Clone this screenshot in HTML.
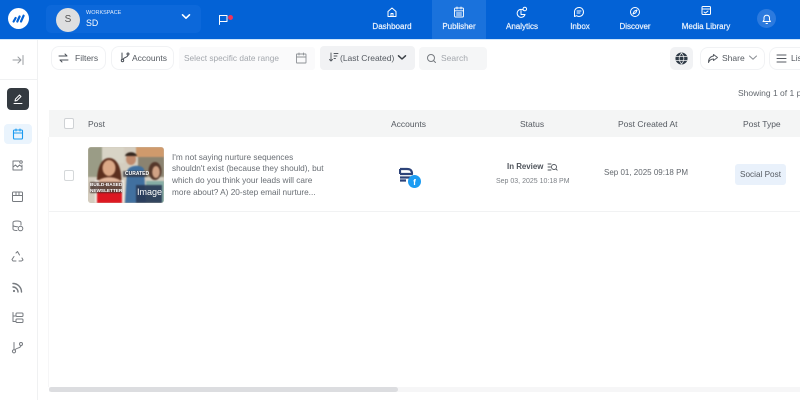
<!DOCTYPE html>
<html><head><meta charset="utf-8">
<style>
*{box-sizing:border-box;margin:0;padding:0}
html,body{width:800px;height:400px;overflow:hidden;background:#fff;font-family:"Liberation Sans",sans-serif;color:#4a4f57}
#w{position:absolute;left:0;top:0;width:800px;height:400px;overflow:hidden;filter:blur(.3px)}
.a{position:absolute}
.t{position:absolute;white-space:nowrap;line-height:12px}
svg{position:absolute;fill:none;stroke-linecap:round;stroke-linejoin:round}
.nav{color:#eef4fd;font-size:8px;text-align:center;top:20.5px;height:12px;line-height:12px;white-space:nowrap;-webkit-text-stroke:.2px #eef4fd}
.btn{position:absolute;border:1px solid #f1f2f4;border-radius:8px;background:#fff;height:24px;top:46px}
.gr{position:absolute;background:#f5f6f7;border-radius:4px}
.th{position:absolute;top:118px;font-size:8.5px;line-height:12px;color:#555a61;white-space:nowrap}
</style></head><body><div id="w">
<div class="a" style="left:0;top:0;width:800px;height:39px;background:#0362d6"></div>
<div class="a" style="left:0;top:39px;width:800px;height:1px;background:#cfe6fb"></div>
<div class="a" style="left:8px;top:8px;width:21px;height:21px;border-radius:50%;background:#fff"></div>
<svg style="left:8px;top:8px" width="21" height="21" stroke="#0362d6" stroke-width="2.200"><path d="M5.600 13.500 7.600 10M9.300 13.500l2.300-5M13 13.500l2.600-5.800"/></svg>
<div class="a" style="left:46px;top:5px;width:155px;height:28px;border-radius:5px;background:#0c68da"></div>
<div class="a" style="left:56px;top:8px;width:24px;height:24px;border-radius:50%;background:#dedfe0;color:#555;font-size:10px;line-height:24px;text-align:center">S</div>
<div class="t" style="left:86px;top:7px;font-size:5.500px;color:#e3edfb;line-height:12px">WORKSPACE</div>
<div class="t" style="left:86px;top:17px;font-size:8.800px;color:#fff">SD</div>
<svg style="left:181px;top:13px" width="10" height="8" stroke="#fff" stroke-width="1.600"><path d="M1.500 1.800 5 5.200 8.500 1.800"/></svg>
<svg style="left:217px;top:13px" width="13" height="13" stroke="#fff" stroke-width="1"><path d="M2.500 11.500V2.500h7.500v6H2.500"/></svg>
<div class="a" style="left:228px;top:14.500px;width:5px;height:5px;border-radius:50%;background:#f0325a"></div>

<div class="a" style="left:432px;top:0;width:54px;height:39px;background:#1a72dc"></div>
<div class="nav a" style="left:367px;width:50px">Dashboard</div>
<div class="nav a" style="left:434px;width:50px">Publisher</div>
<div class="nav a" style="left:497px;width:50px">Analytics</div>
<div class="nav a" style="left:555px;width:50px">Inbox</div>
<div class="nav a" style="left:610px;width:50px">Discover</div>
<div class="nav a" style="left:676px;width:60px">Media Library</div>
<svg style="left:386px;top:6px" width="12" height="12" stroke="#fff" stroke-width="1"><path d="M2 5.500 6 2l4 3.500V10.500H2zM5 10.500V7.500h2v3"/></svg>
<svg style="left:453px;top:6px" width="12" height="12" stroke="#fff" stroke-width=".9"><rect x="1.500" y="2" width="9" height="9" rx="1"/><path d="M1.500 4.800h9M4 1v2M8 1v2M3.500 7h5M3.500 9h5"/></svg>
<svg style="left:516px;top:6px" width="12" height="12" stroke="#fff" stroke-width="1"><path d="M8 4.500A4 4 0 1 0 9 8.500H5V4.500"/><circle cx="8.800" cy="3" r="1.800"/></svg>
<svg style="left:573px;top:6px" width="12" height="12" stroke="#fff" stroke-width="1"><path d="M1.500 6a4.500 4.500 0 1 1 2 3.700L1.500 10.500zM4 5h4M4 7h3"/></svg>
<svg style="left:629px;top:6px" width="12" height="12" stroke="#fff" stroke-width="1"><circle cx="6" cy="6" r="4.500"/><path d="M8 4 6.800 6.800 4 8l1.200-2.800z"/></svg>
<svg style="left:700px;top:5px" width="12" height="12" stroke="#fff" stroke-width="1"><rect x="2" y="1.500" width="8.500" height="8" rx="1"/><path d="M2 4h8.500M4 7l1.500 1L8 6"/></svg>
<div class="a" style="left:757px;top:9px;width:19px;height:19px;border-radius:50%;background:#2c7ade"></div>
<svg style="left:761px;top:13px" width="12" height="12" stroke="#fff" stroke-width="1"><path d="M2 8.500h7.500L8.500 7V4.500a2.800 2.800 0 0 0-5.500 0V7zM5 10.500h1.500"/></svg>

<div class="a" style="left:37px;top:40px;width:1px;height:360px;background:#f0f1f2"></div>
<div class="a" style="left:0;top:79px;width:37px;height:1px;background:#f0f1f2"></div>
<svg style="left:11px;top:53px" width="14" height="14" stroke="#9a9da1" stroke-width="1"><path d="M2 7h8M7 4l3 3-3 3M12 2.500v9"/></svg>
<div class="a" style="left:7px;top:88px;width:22px;height:22px;border-radius:4px;background:#343a40"></div>
<svg style="left:12px;top:93px" width="12" height="12" stroke="#fff" stroke-width="1"><path d="M3 8l.5-2 4-4 1.500 1.500-4 4zM2 10.500h8"/></svg>
<div class="a" style="left:4px;top:124px;width:28px;height:20px;border-radius:4px;background:#eaf4fd"></div>
<svg style="left:12px;top:128px" width="12" height="12" stroke="#1d9bf0" stroke-width="1.100"><rect x="1.500" y="2" width="9" height="9" rx="1"/><path d="M1.500 5h9M4 1v2M8 1v2"/></svg>
<svg style="left:11px;top:159px" width="13" height="13" stroke="#777b80" stroke-width="1"><path d="M8 2H2v9h9V6M2 8l2.500-2 2 2 2-2 2.500 2"/><circle cx="10" cy="3" r="1.300"/></svg>
<svg style="left:11px;top:190px" width="13" height="13" stroke="#777b80" stroke-width="1"><rect x="1.500" y="2" width="10" height="9.500" rx="1"/><path d="M1.500 5.500h10M5 2v3.500M8 2v3.500"/></svg>
<svg style="left:11px;top:219px" width="13" height="13" stroke="#777b80" stroke-width="1"><path d="M2 3.500C2 1.500 10 1.500 10 3.500V6M2 3.500V10c0 1 2 1.500 4 1.500M2 6.500c1 1 3 1.200 4.500 1.200"/><circle cx="9.500" cy="9.500" r="2.300"/></svg>
<svg style="left:11px;top:250px" width="13" height="13" stroke="#777b80" stroke-width="1"><path d="M5 3l1.500-1.500L8.500 5M11 8l1 2-1.500 1H8M5 11H2L1 9.500 3 6.500"/></svg>
<svg style="left:11px;top:281px" width="13" height="13" stroke="#777b80" stroke-width="1.400"><path d="M2 2.500a8.500 8.500 0 0 1 8.500 8.500M2 6a5 5 0 0 1 5 5"/><circle cx="3" cy="10" r="1.100" fill="#777b80" stroke="none"/></svg>
<svg style="left:11px;top:311px" width="13" height="13" stroke="#777b80" stroke-width="1"><path d="M2 1.500v9h3M2 5h3"/><rect x="5" y="2" width="7" height="3.500" rx="1"/><rect x="5" y="8" width="7" height="3.500" rx="1"/></svg>
<svg style="left:11px;top:341px" width="13" height="13" stroke="#777b80" stroke-width="1"><path d="M3 1.500v7M10 4.500c0 3-5 2-6 4.500"/><circle cx="3" cy="10.300" r="1.600"/><circle cx="10" cy="3" r="1.500"/></svg>

<div class="btn" style="left:51px;width:55px"></div>
<svg style="left:58px;top:53px" width="11" height="10" stroke="#4a4f57" stroke-width="1"><path d="M1 3h8M7 1l2 2M10 7H2M4 9 2 7"/></svg>
<div class="t" style="left:75px;top:52px;font-size:8.500px;color:#555a61">Filters</div>
<div class="btn" style="left:111px;width:63px"></div>
<svg style="left:120px;top:52px" width="11" height="11" stroke="#4a4f57" stroke-width="1"><path d="M2 1v6M8 3c0 2.500-4 2-5 4.500"/><circle cx="2.500" cy="8.500" r="1.200"/><circle cx="8" cy="2" r="1"/></svg>
<div class="t" style="left:132px;top:52px;font-size:8.500px;color:#555a61">Accounts</div>
<div class="a" style="left:179px;top:47px;width:136px;height:23px;background:#fafafb;border-radius:3px"></div>
<div class="t" style="left:184px;top:52px;font-size:8.300px;color:#a3a7ad">Select specific date range</div>
<svg style="left:295px;top:52px" width="12" height="12" stroke="#8d9196" stroke-width=".9"><rect x="1.500" y="2" width="9.500" height="9" rx=".5"/><path d="M1.500 5h9.500M4 1v2M8.500 1v2"/></svg>
<div class="gr" style="left:320px;top:46px;width:95px;height:24px;background:#f1f2f4"></div>
<svg style="left:328px;top:52px" width="11" height="11" stroke="#555a61" stroke-width=".9"><path d="M3 1v8M1.500 7.500 3 9l1.500-1.500M6 1.500h4M6 4h3M6 6.500h1.500"/></svg>
<div class="t" style="left:340px;top:52px;font-size:8.500px;color:#555a61">(Last Created)</div>
<svg style="left:397px;top:54px" width="10" height="8" stroke="#3a3f45" stroke-width="1.500"><path d="M1.500 1.800 5 5 8.500 1.800"/></svg>
<div class="gr" style="left:419px;top:47px;width:68px;height:23px"></div>
<svg style="left:426px;top:53px" width="11" height="11" stroke="#777b80" stroke-width="1"><circle cx="5" cy="5" r="3.500"/><path d="m7.800 7.800 1.700 1.700"/></svg>
<div class="t" style="left:441px;top:52px;font-size:8.500px;color:#a3a7ad">Search</div>

<div class="a" style="left:670px;top:47px;width:23px;height:23px;border-radius:5px;background:#f1f2f4"></div>
<svg style="left:675px;top:52px" width="13" height="13" stroke="#2f3a46" stroke-width="1.100"><circle cx="6.500" cy="6.500" r="5.500" fill="#2f3a46"/><path stroke="#f1f2f4" stroke-width=".7" d="M1 4.500h11M1 8.500h11M6.500 1c-3 3.500-3 7.500 0 11M6.500 1c3 3.500 3 7.500 0 11"/></svg>
<div class="btn" style="left:700px;width:65px;top:47px;height:23px"></div>
<svg style="left:707px;top:53px" width="12" height="11" stroke="#555a61" stroke-width="1"><path d="M6.500 1.500 10.500 4.500 6.500 7.500V6C4 6 2.500 7 1.500 9.500 1.500 5.500 3.500 3.500 6.500 3z"/></svg>
<div class="t" style="left:722px;top:52px;font-size:8.500px;color:#555a61">Share</div>
<svg style="left:748px;top:54px" width="10" height="8" stroke="#888c91" stroke-width="1"><path d="M1.500 2 5 5.200 8.500 2"/></svg>
<div class="btn" style="left:769px;width:50px;top:47px;height:23px"></div>
<svg style="left:776px;top:53px" width="11" height="11" stroke="#555a61" stroke-width="1"><path d="M1 2h9M1 5.500h9M1 9h9"/></svg>
<div class="t" style="left:791px;top:52px;font-size:8.500px;color:#555a61">List</div>

<div class="t" style="left:738px;top:87px;font-size:8.500px;color:#63686e">Showing 1 of 1 posts</div>

<div class="a" style="left:49px;top:110px;width:751px;height:27px;background:#f4f5f5"></div>
<div class="a" style="left:48px;top:137px;width:1px;height:250px;background:#f6f6f7"></div>
<div class="a" style="left:64px;top:118px;width:10px;height:11px;background:#fff;border:1px solid #cfd2d5;border-radius:2px"></div>
<div class="th" style="left:88px">Post</div>
<div class="th" style="left:391px">Accounts</div>
<div class="th" style="left:520px">Status</div>
<div class="th" style="left:618px">Post Created At</div>
<div class="th" style="left:743px">Post Type</div>

<div class="a" style="left:49px;top:211px;width:751px;height:1px;background:#f1f2f3"></div>
<div class="a" style="left:64px;top:170px;width:10px;height:11px;background:#fff;border:1px solid #d5d8da;border-radius:2px"></div>

<div class="a" style="left:88px;top:147px;width:76px;height:56px;border-radius:3px;overflow:hidden;background:#cfc7b8">
<svg style="left:0;top:0;filter:blur(.7px)" width="76" height="56">
<rect width="76" height="56" fill="#d4cdbf"/>
<rect x="0" width="14" height="30" fill="#9a9c86"/>
<rect x="14" width="22" height="16" fill="#d8d4c6"/>
<rect x="48" width="28" height="10" fill="#cf9a6c"/>
<rect x="50" y="10" width="26" height="20" fill="#8b8370"/>
<path d="M9 42C8 24 12 11 21 11s14 12 12 31z" fill="#5c2f1e"/>
<ellipse cx="21" cy="21" rx="6.500" ry="8" fill="#dba887"/>
<path d="M10 50V34c5-5 17-5 23 0v16z" fill="#e3b79c"/>
<path d="M7 33h4v23H7zM33 33h3v23h-3z" fill="#f1ece4"/>
<path d="M9 56V45h25v11z" fill="#dd1721"/>
<path d="M37 56l2-32c2-6 14-7 17-2l2 34z" fill="#41709f"/>
<ellipse cx="43" cy="12" rx="5" ry="6" fill="#c08a6c"/>
<path d="M37 9c1-5 11-5 12 0z" fill="#33261d"/>
<ellipse cx="67" cy="24" rx="6.500" ry="9" fill="#54372a"/>
<ellipse cx="68" cy="25" rx="3.800" ry="6" fill="#d0a285"/>
<path d="M58 56V34h18v22z" fill="#86aea6"/>
<rect x="2" y="35" width="32" height="11" fill="#3a2420" opacity=".75"/>
<rect x="35" y="24" width="24" height="6" fill="#2c2c34" opacity=".7"/>
<rect x="48" y="38" width="26" height="18" fill="#283855" opacity=".9"/>
</svg>
<div class="t" style="left:2px;top:35px;width:32px;font-size:4.700px;line-height:5.500px;font-weight:bold;color:#fff;text-align:center">BUILD-BASED<br>NEWSLETTER</div>
<div class="t" style="left:37px;top:23.500px;font-size:5px;line-height:7px;font-weight:bold;color:#fff">CURATED</div>
<div class="t" style="left:49px;top:39px;font-size:9px;color:#fff">Image</div>
</div>

<div class="t" style="left:172px;top:151.500px;font-size:8.250px;line-height:11.670px;color:#696e74">I'm not saying nurture sequences<br>shouldn't exist (because they should), but<br>which do you think your leads will care<br>more about? A) 20-step email nurture...</div>

<svg style="left:399px;top:166px" width="16" height="16" stroke="#2d4379" stroke-width="2.200" stroke-linecap="butt"><path d="M1 3h7c4 0 5 2 5 5H1M1 8v-5M1 11.500h11M1 14.500h6" stroke-linecap="butt"/></svg>
<div class="a" style="left:408px;top:175px;width:13px;height:13px;border-radius:50%;background:#1c9cf2;color:#fff;font-size:8.500px;font-weight:bold;line-height:14px;text-align:center">f</div>

<div class="t" style="left:507px;top:161px;font-size:7.900px;font-weight:bold;color:#4f545b">In Review</div>
<svg style="left:547px;top:162px" width="11" height="11" stroke="#4f545b" stroke-width=".9"><path d="M1 2h3M1 5h2.500M1 8h3"/><circle cx="7" cy="5" r="2.500"/><path d="m9 7 1.200 1.200"/></svg>
<div class="t" style="left:496px;top:176px;font-size:7px;color:#7c8086">Sep 03, 2025 10:18 PM</div>

<div class="t" style="left:604px;top:167px;font-size:8px;color:#63686e">Sep 01, 2025 09:18 PM</div>
<div class="a" style="left:735px;top:164px;width:51px;height:21px;background:#e9f1fb;border-radius:3px;font-size:8.200px;line-height:21px;text-align:center;color:#555a61;white-space:nowrap">Social Post</div>

<div class="a" style="left:49px;top:387px;width:751px;height:5px;background:#f6f6f7"></div>
<div class="a" style="left:49px;top:387px;width:349px;height:5px;border-radius:3px;background:#dcdde0"></div>
</div></body></html>
